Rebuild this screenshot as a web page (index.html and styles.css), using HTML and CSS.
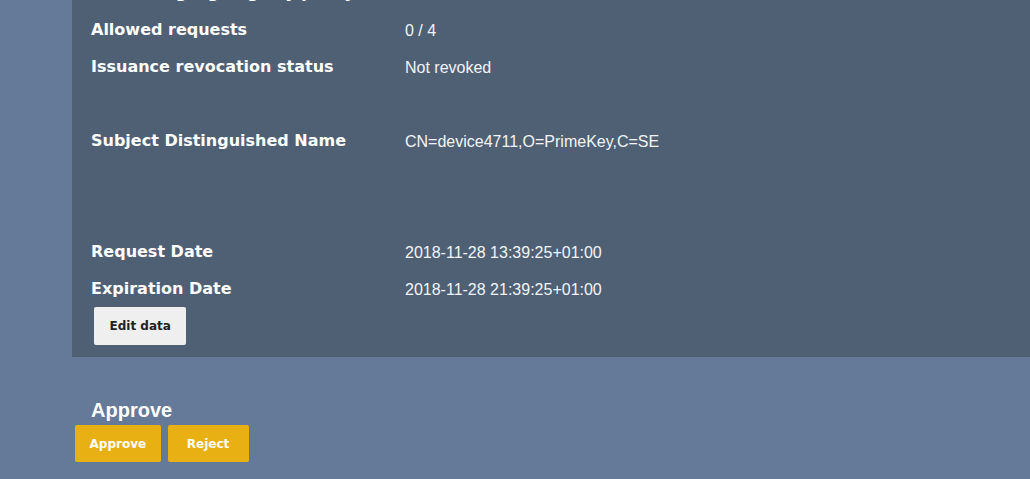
FILE: index.html
```html
<!DOCTYPE html>
<html>
<head>
<meta charset="utf-8">
<link rel="stylesheet" href="styles.css">
</head>
<body>
<div class="page">
  <div class="panel">
    <div class="rows">
      <div class="row"><div class="label">Remaining signing key policy</div><div class="value"></div></div>
      <div class="row"><div class="label">Allowed requests</div><div class="value">0 / 4</div></div>
      <div class="row"><div class="label">Issuance revocation status</div><div class="value">Not revoked</div></div>
      <div class="row"></div>
      <div class="row"><div class="label">Subject Distinguished Name</div><div class="value">CN=device4711,O=PrimeKey,C=SE</div></div>
      <div class="row"></div>
      <div class="row"></div>
      <div class="row"><div class="label">Request Date</div><div class="value">2018-11-28 13:39:25+01:00</div></div>
      <div class="row"><div class="label">Expiration Date</div><div class="value">2018-11-28 21:39:25+01:00</div></div>
    </div>
    <button class="btn-edit">Edit data</button>
  </div>
  <div class="approve-section">
    <h2 class="approve-title">Approve</h2>
    <div class="actions">
      <button class="btn-yellow">Approve</button>
      <button class="btn-yellow">Reject</button>
    </div>
  </div>
</div>
</body>
</html>
```
FILE: styles.css
```css
html {
  overflow: hidden;
  background: #657a98;
}
body {
  margin: 0;
  padding: 0;
  background: #657a98;
}
.page {
  padding: 1px 0 10px 72px;
}
.panel {
  background: #4f6075;
  margin-top: -28px;
  padding: 10px 0 12px 19px;
}
.rows {
  display: flex;
  flex-direction: column;
  gap: 17px;
}
.row {
  display: grid;
  grid-template-columns: 314px 1fr;
  height: 20px;
}
.label {
  font-family: "DejaVu Sans", sans-serif;
  font-weight: bold;
  font-size: 16px;
  line-height: 20px;
  color: #ffffff;
  white-space: nowrap;
}
.value {
  font-family: "Liberation Sans", Arial, sans-serif;
  font-size: 16px;
  line-height: 20px;
  padding-top: 1px;
  color: #f2f4f7;
  white-space: nowrap;
}
.btn-edit {
  display: block;
  margin: 8px 0 0 3px;
  height: 38px;
  padding: 0 15.5px;
  background: #efefef;
  color: #222222;
  border: none;
  border-radius: 2px;
  font-family: "DejaVu Sans", sans-serif;
  font-weight: bold;
  font-size: 12px;
}
.approve-section {
  padding-left: 3px;
}
.approve-title {
  margin: 42px 0 3px 16px;
  font-family: "Liberation Sans", Arial, sans-serif;
  font-weight: bold;
  font-size: 20px;
  line-height: 23px;
  color: #ffffff;
}
.actions {
  display: flex;
  gap: 7px;
}
.btn-yellow {
  height: 37px;
  min-width: 81px;
  padding: 0 14.5px;
  background: #e9b014;
  color: #ffffff;
  border: none;
  border-radius: 2px;
  font-family: "DejaVu Sans", sans-serif;
  font-weight: bold;
  font-size: 12px;
}
```
